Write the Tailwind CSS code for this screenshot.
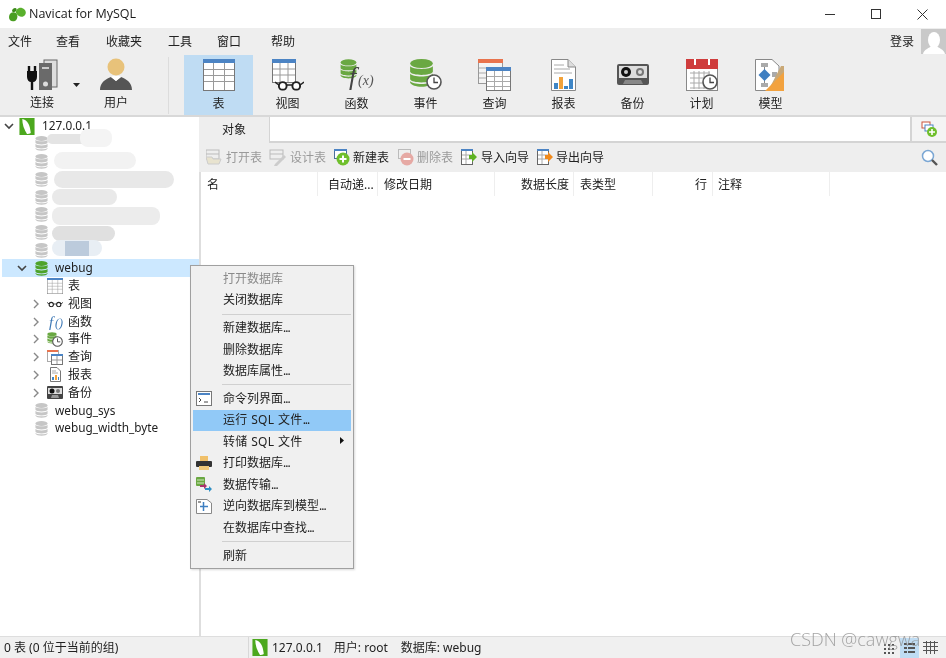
<!DOCTYPE html>
<html lang="zh">
<head>
<meta charset="utf-8">
<script src="https://cdn.jsdelivr.net/npm/@tailwindcss/browser@4"></script>
<title>Navicat for MySQL</title>
</head>
<body class="m-0 overflow-hidden bg-white">
<svg width="0" height="0" class="absolute">
  <defs>
    <symbol id="db" viewBox="0 0 14 16">
      <ellipse cx="7" cy="2.600" rx="6.500" ry="2.600" fill="currentColor"/>
      <path d="M.5 4c1 2.200 12 2.200 13 0v3.300c-1 2.400-12 2.400-13 0zM.5 8.300c1 2.300 12 2.300 13 0v3.300c-1 2.400-12 2.400-13 0zM.5 12.600c1 2.300 12 2.300 13 0v.8c-1 3.200-12 3.200-13 0z" fill="currentColor"/>
    </symbol>
    <symbol id="leaf" viewBox="0 0 16 18">
      <rect width="16" height="18" fill="#4ca81e"/>
      <path d="M3 1c5 1 8 5 9 15-1 1-3 1-4 1C5 12 3 7 3 1z" fill="#fff"/>
    </symbol>
    <symbol id="grid" viewBox="0 0 32 32">
      <rect x=".5" y=".5" width="31" height="31" fill="#fff" stroke="#777"/>
      <rect x="0" y="0" width="32" height="4" fill="#4c84c4"/>
      <path d="M1 10.500h30M1 16.500h30M1 22.500h30M10.500 4v27M21.500 4v27" stroke="#9a9a9a" fill="none"/>
    </symbol>
    <symbol id="clock" viewBox="0 0 16 16">
      <circle cx="8" cy="8" r="7" fill="#fff" stroke="#555" stroke-width="1.600"/>
      <path d="M8 3.500V8.500H12" fill="none" stroke="#444" stroke-width="1.300"/>
    </symbol>
    <symbol id="glasses" viewBox="0 0 30 12">
      <circle cx="8" cy="7" r="4" fill="#fff" stroke="#222" stroke-width="2"/>
      <circle cx="22" cy="7" r="4" fill="#fff" stroke="#222" stroke-width="2"/>
      <path d="M12 6h6M4 6 0 3M26 6l4-3" fill="none" stroke="#222" stroke-width="1.500"/>
    </symbol>
  </defs>
</svg>

<div class="relative flex h-[658px] w-[946px] flex-col overflow-hidden bg-white text-[12px] text-[#222] blur-[0.35px]" style="font-family:'Noto Sans','Noto Sans CJK SC',sans-serif">

  <!-- title bar -->
  <header class="flex h-[28px] items-center bg-white pl-[9px]">
    <svg width="17" height="15" viewBox="0 0 17 15" class="mr-[3px]">
      <path d="M0 10C0 6 4 4 7 6c2 2 2 6-1 8-3 1-6 0-6-4z" fill="#4a9e22"/>
      <path d="M7 6c-1-3 3-6 6-5 3 1 5 4 3 7-2 3-7 2-9-2z" fill="#59b02c"/>
      <path d="M3 4c0-2 2-3 3-3 2 0 2 2 1 3-1 1-3 2-4 0z" fill="#3c8a1a"/>
    </svg>
    <span class="text-[12.500px] leading-none text-[#1a1a1a]" style="font-family:'Open Sans',sans-serif">Navicat for MySQL</span>
    <div class="ml-auto flex h-full items-center">
      <div class="flex w-[46px] justify-center"><svg width="11" height="11"><path d="M0 5.500H10" stroke="#333"/></svg></div>
      <div class="flex w-[46px] justify-center"><svg width="11" height="11"><rect x=".5" y=".5" width="9" height="9" fill="none" stroke="#333"/></svg></div>
      <div class="flex w-[47px] justify-center pr-[1px]"><svg width="11" height="11"><path d="M.5.500l10 10M10.500.500l-10 10" stroke="#333"/></svg></div>
    </div>
  </header>

  <!-- menu bar -->
  <nav class="flex h-[27px] items-center bg-[#eeeeee] leading-none">
    <span class="ml-[8px]">文件</span>
    <span class="ml-[24px]">查看</span>
    <span class="ml-[26px]">收藏夹</span>
    <span class="ml-[26px]">工具</span>
    <span class="ml-[25px]">窗口</span>
    <span class="ml-[30px]">帮助</span>
    <span class="ml-auto mr-[7px]">登录</span>
    <div class="flex h-[25px] w-[25px] items-end justify-center overflow-hidden bg-[#c9c9c9]">
      <svg width="24" height="23" viewBox="0 0 24 23"><ellipse cx="12" cy="9" rx="6" ry="8" fill="#fff"/><path d="M1 23c1-5 7-6 8-8h6c1 2 7 3 8 8z" fill="#fff"/></svg>
    </div>
  </nav>

  <!-- main toolbar -->
  <div class="flex h-[62px] items-start border-b-2 border-[#d8d8d8] bg-[#eeeeee]">
    <div class="relative flex h-full w-[84px] flex-col items-center pt-[4px]">
      <svg width="34" height="32" viewBox="0 0 34 32">
        <rect x="19" y="1" width="13" height="27" fill="#ddd" stroke="#666"/>
        <rect x="14" y="4" width="13" height="27" fill="#6a6a6a"/>
        <rect x="17" y="8" width="7" height="2" fill="#ccc"/>
        <circle cx="20.500" cy="25" r="2.500" fill="#ddd"/>
        <path d="M2 12v6c0 3 2 5 4 5h2c2 0 4-2 4-5v-6z" fill="#111"/>
        <path d="M4 7v6M10 7v6M7 22v9" stroke="#111" stroke-width="2.400"/>
      </svg>
      <span class="absolute top-[42px] left-[30px] leading-none">连接</span>
    </div>
    <div class="relative flex h-full w-[0px]"><svg class="absolute top-[28px] -left-[11px]" width="7" height="4"><path d="M0 0h7L3.500 4z" fill="#222"/></svg></div>
    <div class="relative flex h-full w-[64px] flex-col items-center pt-[3px]">
      <svg width="34" height="33" viewBox="0 0 34 33">
        <circle cx="17" cy="9" r="8.500" fill="#e8c27a"/>
        <path d="M1 32c0-8 6-11 11-13l5 4 5-4c5 2 11 5 11 13z" fill="#555"/>
        <path d="M12 19l5 4 5-4-2-1h-6z" fill="#fff"/>
      </svg>
      <span class="absolute top-[42px] leading-none">用户</span>
    </div>
    <div class="ml-[20px] mt-[2px] h-[57px] w-px bg-[#dcdcdc]"></div>
    <div class="ml-[15px] flex h-full w-[69px] flex-col items-center bg-[#bfdcf3] pt-[4px]">
      <svg width="32" height="32"><use href="#grid"/></svg>
      <span class="mt-[7px] leading-none">表</span>
    </div>
    <div class="flex h-full w-[69px] flex-col items-center pt-[4px]">
      <svg width="32" height="32" viewBox="0 0 32 32">
        <rect x=".5" y=".5" width="23" height="23" fill="#fff" stroke="#777"/>
        <rect width="24" height="4" fill="#4c84c4"/>
        <path d="M1 10h22M1 16h22M8 4v19M16 4v19" stroke="#9a9a9a" fill="none"/>
        <svg x="3" y="20" width="29" height="12" viewBox="0 0 30 12"><use href="#glasses"/></svg>
      </svg>
      <span class="mt-[7px] leading-none">视图</span>
    </div>
    <div class="flex h-full w-[69px] flex-col items-center pt-[4px]">
      <svg width="34" height="32" viewBox="0 0 34 32" class="overflow-visible">
        <svg x="0" y="0" width="17" height="20" class="text-[#6aa842]"><use href="#db"/></svg>
        <text x="9" y="26" font-family="Liberation Serif" font-style="italic" font-size="26" fill="#444">f</text>
        <text x="18" y="26" font-family="Liberation Serif" font-style="italic" font-size="14" fill="#555">(x)</text>
      </svg>
      <span class="mt-[7px] leading-none">函数</span>
    </div>
    <div class="flex h-full w-[69px] flex-col items-center pt-[4px]">
      <svg width="34" height="32" viewBox="0 0 34 32">
        <svg x="0" y="0" width="25" height="28" class="text-[#6aa842]"><use href="#db"/></svg>
        <svg x="17" y="15" width="16" height="16"><use href="#clock"/></svg>
      </svg>
      <span class="mt-[7px] leading-none">事件</span>
    </div>
    <div class="flex h-full w-[69px] flex-col items-center pt-[4px]">
      <svg width="33" height="32" viewBox="0 0 33 32">
        <rect x=".5" y=".5" width="24" height="24" fill="#f4f4f4" stroke="#999"/>
        <rect width="25" height="4" fill="#e8734d"/>
        <path d="M1 9h8M1 14h8M1 19h8" stroke="#aaa"/>
        <rect x="8.500" y="8.500" width="24" height="23" fill="#fff" stroke="#777"/>
        <rect x="8" y="8" width="25" height="4" fill="#4c84c4"/>
        <path d="M9 17.500h23M9 22.500h23M9 27.500h23M16.500 12v19M24.500 12v19" stroke="#aaa" fill="none"/>
      </svg>
      <span class="mt-[7px] leading-none">查询</span>
    </div>
    <div class="flex h-full w-[69px] flex-col items-center pt-[4px]">
      <svg width="25" height="32" viewBox="0 0 25 32">
        <path d="M.5.500H17L24.500 8V31.500H.5z" fill="#fff" stroke="#888"/>
        <path d="M17 .5V8h7.500" fill="#ddd" stroke="#888"/>
        <path d="M3 6h10M3 10h16M3 14h18" stroke="#aaa"/>
        <rect x="3" y="24" width="4" height="6" fill="#3f86c6"/><rect x="8" y="18" width="4" height="12" fill="#f2a23a"/><rect x="13" y="27" width="4" height="3" fill="#3f86c6"/><rect x="18" y="20" width="4" height="10" fill="#3f86c6"/>
      </svg>
      <span class="mt-[7px] leading-none">报表</span>
    </div>
    <div class="flex h-full w-[69px] flex-col items-center pt-[8px]">
      <svg width="32" height="23" viewBox="0 0 32 21">
        <rect width="32" height="21" rx="2" fill="#555"/>
        <rect x="2" y="2" width="28" height="12" fill="#ddd"/>
        <circle cx="9" cy="8" r="5" fill="#111"/><circle cx="9" cy="8" r="2" fill="#ccc"/>
        <circle cx="23" cy="8" r="4" fill="#777"/><circle cx="23" cy="8" r="2" fill="#ddd"/>
        <path d="M6 20l2-4h16l2 4z" fill="#888"/>
      </svg>
      <span class="mt-[12px] leading-none">备份</span>
    </div>
    <div class="flex h-full w-[69px] flex-col items-center pt-[4px]">
      <svg width="32" height="32" viewBox="0 0 32 32">
        <rect x=".5" y=".5" width="31" height="31" fill="#fff" stroke="#888"/>
        <rect width="32" height="10" fill="#cf3c3c"/>
        <path d="M9 0v6M23 0v6" stroke="#fff" stroke-width="2"/>
        <path d="M4 14h20M4 19h16M4 24h16M4 29h16M8 12v18M13 12v18M18 12v18M23 12v6" stroke="#aaa" fill="none"/>
        <svg x="16" y="15" width="16" height="16"><use href="#clock"/></svg>
      </svg>
      <span class="mt-[7px] leading-none">计划</span>
    </div>
    <div class="flex h-full w-[69px] flex-col items-center pt-[4px]">
      <svg width="32" height="32" viewBox="0 0 32 32">
        <path d="M.5.500H17L24 7V31.500H.5z" fill="#fff" stroke="#888"/>
        <rect x="6" y="4" width="7" height="4" fill="#aaa"/><rect x="17" y="13" width="5" height="5" fill="#aaa"/><rect x="6" y="24" width="7" height="4" fill="#aaa"/>
        <path d="M9.500 8v16" stroke="#888"/>
        <path d="M9.500 10l6 6-6 6-6-6z" fill="#3f7fc1"/>
        <path d="M26 7h3v25H13z" fill="#c9a876"/>
        <path d="M29 13v19H10z" fill="#f2a23f"/>
      </svg>
      <span class="mt-[7px] leading-none">模型</span>
    </div>
  </div>

  <!-- body -->
  <div class="flex min-h-0 flex-1">
    <!-- tree -->
    <aside class="relative w-[199px] shrink-0 overflow-hidden pl-[2px] text-[11.800px]">
      <div class="flex h-[18px] items-center pl-[2px]">
        <svg width="10" height="7" class="mr-[5px]" viewBox="0 0 10 7"><path d="M1 1l4 4 4-4" fill="none" stroke="#444" stroke-width="1.600"/></svg>
        <svg width="16" height="17" class="mr-[7px]"><use href="#leaf"/></svg><span>127.0.0.1</span>
      </div>
      <div class="flex h-[17.750px] items-center pl-[33px] text-[#c6c6c6]"><svg width="13" height="15"><use href="#db"/></svg></div>
      <div class="flex h-[17.750px] items-center pl-[33px] text-[#c6c6c6]"><svg width="13" height="15"><use href="#db"/></svg></div>
      <div class="flex h-[17.750px] items-center pl-[33px] text-[#c6c6c6]"><svg width="13" height="15"><use href="#db"/></svg></div>
      <div class="flex h-[17.750px] items-center pl-[33px] text-[#c6c6c6]"><svg width="13" height="15"><use href="#db"/></svg></div>
      <div class="flex h-[17.750px] items-center pl-[33px] text-[#c6c6c6]"><svg width="13" height="15"><use href="#db"/></svg></div>
      <div class="flex h-[17.750px] items-center pl-[33px] text-[#c6c6c6]"><svg width="13" height="15"><use href="#db"/></svg></div>
      <div class="flex h-[17.750px] items-center pl-[33px] text-[#c6c6c6]"><svg width="13" height="15"><use href="#db"/></svg></div>
      <div class="flex h-[18px] items-center bg-[#cce8ff] pl-[15px]">
        <svg width="10" height="7" class="mr-[8px]" viewBox="0 0 10 7"><path d="M1 1l4 4 4-4" fill="none" stroke="#444" stroke-width="1.600"/></svg>
        <svg width="13" height="15" class="mr-[7px] text-[#4ea32a]"><use href="#db"/></svg><span>webug</span>
      </div>
      <div class="flex h-[17.750px] items-center pl-[45px]">
        <svg width="16" height="16" class="mr-[5px]"><use href="#grid"/></svg><span class="text-[12px]">表</span>
      </div>
      <div class="flex h-[17.750px] items-center pl-[31px]">
        <svg width="6" height="10" class="mr-[8px]"><path d="M1 1l4 4-4 4" fill="none" stroke="#888" stroke-width="1.400"/></svg>
        <svg width="16" height="8" class="mr-[5px]" viewBox="0 0 30 12"><use href="#glasses"/></svg><span class="text-[12px]">视图</span>
      </div>
      <div class="flex h-[17.750px] items-center pl-[31px]">
        <svg width="6" height="10" class="mr-[8px]"><path d="M1 1l4 4-4 4" fill="none" stroke="#888" stroke-width="1.400"/></svg>
        <svg width="16" height="16" class="mr-[5px]" viewBox="0 0 16 16"><text x="2" y="13" font-family="Liberation Serif" font-style="italic" font-size="15" fill="#3d78b5">f</text><text x="8" y="13" font-family="Liberation Serif" font-style="italic" font-size="12" fill="#3d78b5">()</text></svg><span class="text-[12px]">函数</span>
      </div>
      <div class="flex h-[17.750px] items-center pl-[31px]">
        <svg width="6" height="10" class="mr-[8px]"><path d="M1 1l4 4-4 4" fill="none" stroke="#888" stroke-width="1.400"/></svg>
        <svg width="16" height="15" class="mr-[5px]" viewBox="0 0 16 15"><svg width="10" height="12" class="text-[#6aa842]"><use href="#db"/></svg><svg x="5" y="4" width="11" height="11"><use href="#clock"/></svg></svg><span class="text-[12px]">事件</span>
      </div>
      <div class="flex h-[17.750px] items-center pl-[31px]">
        <svg width="6" height="10" class="mr-[8px]"><path d="M1 1l4 4-4 4" fill="none" stroke="#888" stroke-width="1.400"/></svg>
        <svg width="16" height="15" class="mr-[5px]" viewBox="0 0 16 15"><rect x=".5" y=".5" width="11" height="11" fill="#fff" stroke="#aaa"/><rect width="11" height="2" fill="#e8734d"/><rect x="4.500" y="4.500" width="11" height="10" fill="#fff" stroke="#777"/><rect x="4" y="4" width="12" height="2" fill="#4c84c4"/><path d="M5 10h10M10 6v8" stroke="#999"/></svg><span class="text-[12px]">查询</span>
      </div>
      <div class="flex h-[17.750px] items-center pl-[31px]">
        <svg width="6" height="10" class="mr-[8px]"><path d="M1 1l4 4-4 4" fill="none" stroke="#888" stroke-width="1.400"/></svg>
        <svg width="16" height="15" class="mr-[5px]" viewBox="0 0 16 15"><path d="M3.500.500H10L13.500 4V14.500H3.500z" fill="#fff" stroke="#777"/><path d="M5 4h4M5 6h6" stroke="#aaa"/><rect x="5" y="10" width="2" height="3" fill="#3f86c6"/><rect x="8" y="8" width="2" height="5" fill="#f2a23a"/><rect x="11" y="10" width="1" height="3" fill="#3f86c6"/></svg><span class="text-[12px]">报表</span>
      </div>
      <div class="flex h-[17.750px] items-center pl-[31px]">
        <svg width="6" height="10" class="mr-[8px]"><path d="M1 1l4 4-4 4" fill="none" stroke="#888" stroke-width="1.400"/></svg>
        <svg width="16" height="13" class="mr-[5px]" viewBox="0 0 16 13"><rect width="16" height="13" rx="1" fill="#444"/><rect x="1" y="2" width="14" height="6" fill="#ddd"/><circle cx="5" cy="5" r="2.500" fill="#111"/><circle cx="11" cy="5" r="2" fill="#777"/><path d="M4 12l1-3h6l1 3z" fill="#999"/></svg><span class="text-[12px]">备份</span>
      </div>
      <div class="flex h-[17.750px] items-center pl-[33px] text-[#c6c6c6]"><svg width="13" height="15" class="mr-[7px]"><use href="#db"/></svg><span class="text-[#222]">webug_sys</span></div>
      <div class="flex h-[17.750px] items-center pl-[33px] text-[#c6c6c6]"><svg width="13" height="15" class="mr-[7px]"><use href="#db"/></svg><span class="text-[#222]">webug_width_byte</span></div>

      <!-- masked names -->
      <div class="absolute top-[17px] left-[47px] h-[10px] w-[40px] rounded-full bg-[#e4e4e4] blur-[0.5px]"></div>
      <div class="absolute top-[12px] left-[80px] h-[18px] w-[32px] rounded-lg bg-[#f4f4f4] blur-[0.5px]"></div>
      <div class="absolute top-[35px] left-[54px] h-[17px] w-[82px] rounded-full bg-[#f2f2f2] blur-[0.5px]"></div>
      <div class="absolute top-[54px] left-[54px] h-[17px] w-[120px] rounded-full bg-[#e8e8e8] blur-[0.5px]"></div>
      <div class="absolute top-[72px] left-[52px] h-[16px] w-[65px] rounded-full bg-[#e9e9e9] blur-[0.5px]"></div>
      <div class="absolute top-[90px] left-[52px] h-[18px] w-[108px] rounded-lg bg-[#ececec] blur-[0.5px]"></div>
      <div class="absolute top-[109px] left-[52px] h-[15px] w-[63px] rounded-full bg-[#e0e0e0] blur-[0.5px]"></div>
      <div class="absolute top-[123px] left-[52px] h-[16px] w-[50px] rounded-full bg-[#e8eef4] blur-[0.5px]"></div>
      <div class="absolute top-[124px] left-[65px] h-[15px] w-[24px] bg-[#bccbdc] blur-[0.5px]"></div>
    </aside>

    <!-- object pane -->
    <main class="flex min-w-0 flex-1 flex-col">
      <div class="flex h-[26px] border-b-2 border-[#d4d4d4]">
        <div class="-mb-[2px] flex h-[26px] w-[71px] shrink-0 items-center justify-center border-r border-[#d4d4d4] bg-[#eeeeee]">对象</div>
        <div class="flex-1"></div>
        <div class="flex w-[36px] shrink-0 items-center justify-center border-l-2 border-[#d4d4d4] bg-[#f4f4f4]">
          <svg width="16" height="16" viewBox="0 0 16 16">
            <rect x="1" y="1" width="8" height="6" fill="#fff" stroke="#c9553c"/><rect x="4" y="4" width="8" height="6" fill="#fff" stroke="#4c84c4"/>
            <circle cx="11" cy="11" r="5" fill="#6fbf2c"/><path d="M11 8v6M8 11h6" stroke="#fff" stroke-width="1.600"/>
          </svg>
        </div>
      </div>
      <div class="flex h-[29px] items-center bg-[#eeeeee] pl-[7px]">
        <div class="flex items-center text-[#9a9a9a]"><svg width="18" height="17" class="mr-[2px]" viewBox="1 0 18 17"><rect x="1" y="1" width="13" height="9" fill="#eee" stroke="#bbb"/><path d="M1 5h13" stroke="#bbb"/><path d="M3 15 1 8h6l1 2h8l-2 5z" fill="#e8e3cf" stroke="#ccc"/></svg>打开表</div>
        <div class="ml-[7px] flex items-center text-[#9a9a9a]"><svg width="18" height="17" class="mr-[3px]" viewBox="0 0 18 17"><rect x="1" y="1" width="13" height="9" fill="#eee" stroke="#bbb"/><path d="M1 5h13" stroke="#bbb"/><path d="M6 15l9-9 2 2-9 9H5z" fill="#ccc"/></svg>设计表</div>
        <div class="ml-[8px] flex items-center"><svg width="17" height="17" class="mr-[2px]" viewBox="0 0 17 17"><rect x=".5" y=".5" width="12" height="9" fill="#fff" stroke="#4c6f9c"/><rect width="13" height="2" fill="#4c84c4"/><circle cx="9" cy="10" r="6.500" fill="#6fbf2c"/><path d="M9 6.500v7M5.500 10h7" stroke="#fff" stroke-width="2"/></svg>新建表</div>
        <div class="ml-[9px] flex items-center text-[#9a9a9a]"><svg width="17" height="17" class="mr-[2px]" viewBox="0 0 17 17"><rect x=".5" y=".5" width="12" height="9" fill="#eee" stroke="#bbb"/><circle cx="9" cy="10" r="6.500" fill="#e6a9a4"/><path d="M5.500 10h7" stroke="#fff" stroke-width="2"/></svg>删除表</div>
        <div class="ml-[8px] flex items-center"><svg width="17" height="17" class="mr-[3px]" viewBox="0 0 17 17"><rect x=".5" y=".5" width="11" height="15" fill="#fff" stroke="#666"/><rect width="12" height="2" fill="#4c84c4"/><path d="M1 6h10M1 10h10M5 2v13" stroke="#aaa"/><path d="M16 8l-5-5v3H8v4h3v3z" fill="#5fb224"/></svg>导入向导</div>
        <div class="ml-[8px] flex items-center"><svg width="17" height="17" class="mr-[2px]" viewBox="0 0 17 17"><rect x=".5" y=".5" width="11" height="15" fill="#fff" stroke="#666"/><rect width="12" height="2" fill="#4c84c4"/><path d="M1 6h10M1 10h10M5 2v13" stroke="#aaa"/><path d="M16 8l-5-5v3H8v4h3v3z" fill="#f08a1d"/></svg>导出向导</div>
        <svg width="17" height="17" class="mr-[8px] ml-auto" viewBox="0 0 17 17"><circle cx="7" cy="7" r="5.500" fill="#fff" stroke="#7ba7d4" stroke-width="1.500"/><path d="M11 11l5 5" stroke="#555" stroke-width="2.400"/></svg>
      </div>
      <div class="flex h-[24px] items-center border-l-2 border-[#dedede] bg-white leading-none">
        <div class="h-full w-[117px] border-r border-[#eeeeee] pt-[7px] pl-[6px]">名</div>
        <div class="h-full w-[60px] border-r border-[#eeeeee] pt-[7px] pl-[10px] whitespace-nowrap">自动递...</div>
        <div class="h-full w-[117px] border-r border-[#eeeeee] pt-[7px] pl-[6px]">修改日期</div>
        <div class="h-full w-[79px] border-r border-[#eeeeee] pt-[7px] pr-[4px] text-right">数据长度</div>
        <div class="h-full w-[79px] border-r border-[#eeeeee] pt-[7px] pl-[6px]">表类型</div>
        <div class="h-full w-[60px] border-r border-[#eeeeee] pt-[7px] pr-[5px] text-right">行</div>
        <div class="h-full w-[117px] border-r border-[#eeeeee] pt-[7px] pl-[5px]">注释</div>
      </div>
      <div class="flex-1 border-l-2 border-[#dedede] bg-white"></div>
    </main>
  </div>

  <!-- status bar -->
  <footer class="relative flex h-[22px] items-center border-t border-[#dedede] bg-[#f0f0f0] leading-none">
    <div class="w-[248px] shrink-0 border-r border-transparent pl-[4px]">0 表 (0 位于当前的组)</div>
    <div class="flex h-full items-center border-l border-[#d8d8d8] pl-[3px]">
      <svg width="16" height="17" class="mr-[4px]"><use href="#leaf"/></svg>
      <span>127.0.0.1</span><span class="ml-[11px]">用户: root</span><span class="ml-[13px]">数据库: webug</span>
    </div>
    <div class="ml-auto mr-[8px] flex items-center">
      <svg width="12" height="12" class="mr-[4px]"><path d="M0 2h2v2H0zM4 2h2v2H4zM8 2h2v2H8zM0 6h2v2H0zM4 6h2v2H4zM8 6h2v2H8zM0 10h2v2H0zM4 10h2v2H4zM8 10h2v2H8z" fill="#555"/></svg>
      <div class="mr-[4px] flex h-[20px] w-[19px] items-center justify-center bg-[#bfdcf3]"><svg width="13" height="12"><path d="M1 1h3v2H1zM5 1h7v2H5zM1 5h3v2H1zM5 5h7v2H5zM1 9h3v2H1zM5 9h7v2H5z" fill="#555"/></svg></div>
      <svg width="15" height="13"><path d="M0 1.500h15M0 5.500h15M0 9.500h15M3.500 0v13M7.500 0v13M11.500 0v13" stroke="#555"/></svg>
    </div>
    <span class="absolute top-[-7px] left-[790px] text-[18px] font-light leading-none text-[#8f8f8f]/80" style="font-family:'Open Sans',sans-serif">CSDN @cawgwa</span>
  </footer>

  <!-- context menu -->
  <div class="absolute top-[265px] left-[190px] w-[164px] border border-[#a0a0a0] bg-[#f0f0f0] py-[2px] pr-[2px] pl-[2px] shadow-[1px_1px_2px_rgba(0,0,0,0.15)]">
    <div class="flex h-[21.500px] items-center pl-[30px] text-[#8a8a8a]">打开数据库</div>
    <div class="flex h-[21.500px] items-center pl-[30px]">关闭数据库</div>
    <div class="my-[2.660px] ml-[29px] h-px bg-[#d0d0d0]"></div>
    <div class="flex h-[21.500px] items-center pl-[30px]">新建数据库<span class="tracking-[-1px]">...</span></div>
    <div class="flex h-[21.500px] items-center pl-[30px]">删除数据库</div>
    <div class="flex h-[21.500px] items-center pl-[30px]">数据库属性<span class="tracking-[-1px]">...</span></div>
    <div class="my-[2.660px] ml-[29px] h-px bg-[#d0d0d0]"></div>
    <div class="flex h-[21.500px] items-center pl-[3px]">
      <svg width="16" height="15" class="mr-[11px]" viewBox="0 0 16 15"><rect x=".5" y=".5" width="15" height="14" fill="#fff" stroke="#777"/><rect x="2" y="2" width="12" height="2" fill="#4c84c4"/><path d="M3 7l2 2-2 2M8 11h4" fill="none" stroke="#444"/></svg>命令列界面<span class="tracking-[-1px]">...</span>
    </div>
    <div class="flex h-[21.500px] items-center bg-[#91c9f7] pl-[30px]"><span class="tracking-[0.35px] whitespace-pre">运行 SQL 文件</span><span class="tracking-[-1px]">...</span></div>
    <div class="relative flex h-[21.500px] items-center pl-[30px] tracking-[0.35px]">转储 SQL 文件<svg class="absolute top-[6px] right-[7px]" width="4" height="7"><path d="M0 0l4 3.500L0 7z" fill="#111"/></svg></div>
    <div class="flex h-[21.500px] items-center pl-[3px]">
      <svg width="16" height="15" class="mr-[11px]" viewBox="0 0 16 15"><rect x="4" y="0" width="8" height="6" fill="#f0c06a"/><rect x="0" y="5" width="16" height="6" rx="1" fill="#333"/><rect x="3" y="10" width="10" height="4" fill="#f0c878"/></svg>打印数据库<span class="tracking-[-1px]">...</span>
    </div>
    <div class="flex h-[21.500px] items-center pl-[3px]">
      <svg width="16" height="15" class="mr-[11px]" viewBox="0 0 16 15"><rect x="0" y="0" width="9" height="9" rx="1" fill="#6aa842"/><path d="M1 3h7M1 6h7" stroke="#cfe6bc"/><path d="M4 8h4V6l3 3-3 3v-2H4z" fill="#a8336a"/><path d="M9 11h4V9l3 3-3 3v-2H9z" fill="#2f8fc4"/></svg>数据传输<span class="tracking-[-1px]">...</span>
    </div>
    <div class="flex h-[21.500px] items-center pl-[3px]">
      <svg width="16" height="15" class="mr-[11px]" viewBox="0 0 16 15"><path d="M.5.500H11L15.500 4V14.500H.5z" fill="#fff" stroke="#888"/><path d="M7.500 3v9M4 7.500h8" stroke="#3f7fc1" stroke-width="1.500"/><rect x="2" y="2" width="3" height="2" fill="#999"/></svg>逆向数据库到模型<span class="tracking-[-1px]">...</span>
    </div>
    <div class="flex h-[21.500px] items-center pl-[30px]">在数据库中查找<span class="tracking-[-1px]">...</span></div>
    <div class="my-[2.660px] ml-[29px] h-px bg-[#d0d0d0]"></div>
    <div class="flex h-[21.500px] items-center pl-[30px]">刷新</div>
  </div>
</div>
</body>
</html>
